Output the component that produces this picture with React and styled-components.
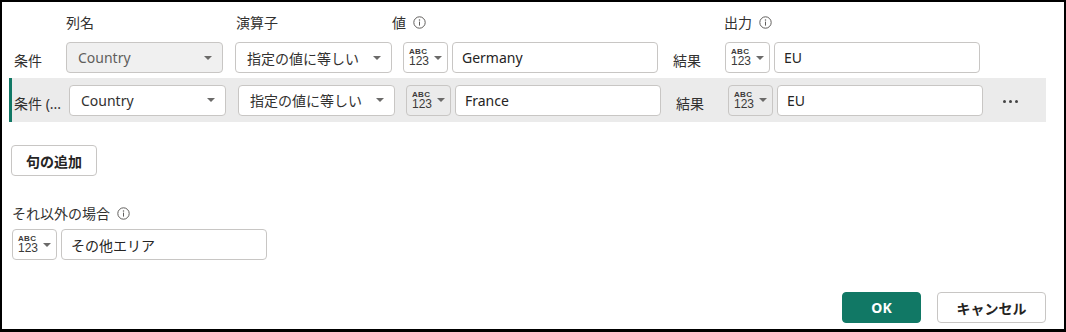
import React from "react";
import styled, { createGlobalStyle } from "styled-components";

const GlobalStyle = createGlobalStyle`
  html, body {
    margin: 0;
    padding: 0;
    background: #ffffff;
  }
  body {
    font-family: "Segoe UI", "Noto Sans", "Noto Sans CJK JP", sans-serif;
    color: #252423;
  }
`;

const Frame = styled.div`
  box-sizing: border-box;
  width: 1066px;
  height: 332px;
  border: 2px solid #000;
  border-bottom-width: 3px;
  background: #fff;
  padding: 11px 18px 6px 7px;
  display: flex;
  flex-direction: column;
  font-size: 14px;
`;

const HeaderRow = styled.div`
  display: flex;
  align-items: center;
  height: 18px;
  padding-left: 57px;
`;

const HeaderCell = styled.div`
  width: ${(p) => p.$w}px;
  display: flex;
  align-items: center;
  gap: 7px;
  color: #323130;
  font-size: 14px;
`;

const ClauseRow = styled.div`
  display: flex;
  align-items: center;
  height: ${(p) => (p.$active ? 44 : 31)}px;
  margin-top: ${(p) => (p.$active ? 5 : 11)}px;
  padding-left: ${(p) => (p.$active ? 2 : 5)}px;
  border-left: ${(p) => (p.$active ? "3px solid #117865" : "none")};
  background: ${(p) => (p.$active ? "#ebebeb" : "transparent")};
`;

const RowLabel = styled.div`
  width: ${(p) => p.$w}px;
  flex-shrink: 0;
  padding-top: 5px;
  white-space: nowrap;
  overflow: hidden;
  color: #323130;
`;

const Select = styled.div`
  box-sizing: border-box;
  width: 157px;
  height: 31px;
  margin-right: ${(p) => p.$mr || 0}px;
  display: flex;
  align-items: center;
  justify-content: space-between;
  padding: 0 10px 0 11px;
  border: 1px solid #c8c6c4;
  border-radius: 4px;
  background: ${(p) => (p.$disabled ? "#f0f0f0" : "#fff")};
  color: ${(p) => (p.$disabled ? "#605e5c" : "#323130")};
  white-space: nowrap;
`;

const Caret = styled.span`
  width: 0;
  height: 0;
  border-left: 4px solid transparent;
  border-right: 4px solid transparent;
  border-top: 4px solid #6b6a69;
  flex-shrink: 0;
`;

const TypeButton = styled.div`
  box-sizing: border-box;
  width: 45px;
  height: 31px;
  flex-shrink: 0;
  display: flex;
  align-items: center;
  gap: 5px;
  padding-left: 5px;
  border: 1px solid #c8c6c4;
  border-radius: 4px;
  background: ${(p) => (p.$gray ? "#ebebeb" : "#fff")};
  margin-right: 4px;
`;

const TypeGlyph = styled.div`
  display: flex;
  flex-direction: column;
  line-height: 1;
  color: #3b3a39;
  font-family: "Liberation Sans", "Noto Sans", sans-serif;
`;

const Abc = styled.span`
  font-size: 8px;
  font-weight: bold;
  letter-spacing: 0.3px;
`;

const Num = styled.span`
  font-size: 12px;
  margin-top: -1px;
`;

const TextInput = styled.div`
  box-sizing: border-box;
  width: 206px;
  height: 31px;
  flex-shrink: 0;
  display: flex;
  align-items: center;
  padding-left: 9px;
  border: 1px solid #c8c6c4;
  border-radius: 4px;
  background: #fff;
  color: #252423;
  margin-right: ${(p) => p.$mr || 0}px;
`;

const More = styled.div`
  display: flex;
  gap: 3px;
  margin-left: 20px;
  padding-top: 2px;
  span {
    width: 3px;
    height: 3px;
    border-radius: 50%;
    background: #444;
  }
`;

const Button = styled.button`
  box-sizing: border-box;
  height: 31px;
  border-radius: 4px;
  font-family: inherit;
  font-size: 14px;
  font-weight: bold;
  cursor: pointer;
  padding: 0 14px;
  border: 1px solid ${(p) => (p.$primary ? "#117865" : "#c8c6c4")};
  background: ${(p) => (p.$primary ? "#117865" : "#fff")};
  color: ${(p) => (p.$primary ? "#fff" : "#252423")};
  width: ${(p) => p.$w}px;
`;

const AddSection = styled.div`
  margin-top: 23px;
  padding-left: 2px;
`;

const ElseLabel = styled.div`
  margin-top: 27px;
  padding-left: 3px;
  display: flex;
  align-items: center;
  gap: 7px;
  color: #323130;
`;

const ElseRow = styled.div`
  display: flex;
  align-items: center;
  margin-top: 6px;
  padding-left: 3px;
`;

const Footer = styled.div`
  margin-top: auto;
  display: flex;
  justify-content: flex-end;
  gap: 16px;
`;

const InfoIcon = () => (
  <svg width="13" height="13" viewBox="0 0 13 13">
    <circle cx="6.5" cy="6.5" r="5.7" fill="none" stroke="#605e5c" strokeWidth="1" />
    <circle cx="6.5" cy="4" r="0.75" fill="#605e5c" />
    <rect x="6" y="5.6" width="1" height="4" fill="#605e5c" />
  </svg>
);

const TypePicker = ({ gray }) => (
  <TypeButton $gray={gray}>
    <TypeGlyph>
      <Abc>ABC</Abc>
      <Num>123</Num>
    </TypeGlyph>
    <Caret />
  </TypeButton>
);

const clauses = [
  { label: "条件", labelW: 52, value: "Germany", out: "EU", active: false },
  { label: "条件 (...", labelW: 55, value: "France", out: "EU", active: true },
];

export default function App() {
  return (
    <>
      <GlobalStyle />
      <Frame>
        <HeaderRow>
          <HeaderCell $w={170}>列名</HeaderCell>
          <HeaderCell $w={156}>演算子</HeaderCell>
          <HeaderCell $w={332}>
            値 <InfoIcon />
          </HeaderCell>
          <HeaderCell $w={120}>
            出力 <InfoIcon />
          </HeaderCell>
        </HeaderRow>

        {clauses.map((c) => (
          <ClauseRow key={c.label} $active={c.active}>
            <RowLabel $w={c.labelW}>{c.label}</RowLabel>
            <Select $disabled={!c.active} $mr={12}>
              Country <Caret />
            </Select>
            <Select $mr={11}>
              指定の値に等しい <Caret />
            </Select>
            <TypePicker gray={c.active} />
            <TextInput $mr={15}>{c.value}</TextInput>
            <RowLabel $w={52}>結果</RowLabel>
            <TypePicker gray={c.active} />
            <TextInput>{c.out}</TextInput>
            {c.active && (
              <More>
                <span />
                <span />
                <span />
              </More>
            )}
          </ClauseRow>
        ))}

        <AddSection>
          <Button $w={86}>句の追加</Button>
        </AddSection>

        <ElseLabel>
          それ以外の場合 <InfoIcon />
        </ElseLabel>
        <ElseRow>
          <TypePicker />
          <TextInput>その他エリア</TextInput>
        </ElseRow>

        <Footer>
          <Button $primary $w={79}>OK</Button>
          <Button $w={109}>キャンセル</Button>
        </Footer>
      </Frame>
    </>
  );
}
